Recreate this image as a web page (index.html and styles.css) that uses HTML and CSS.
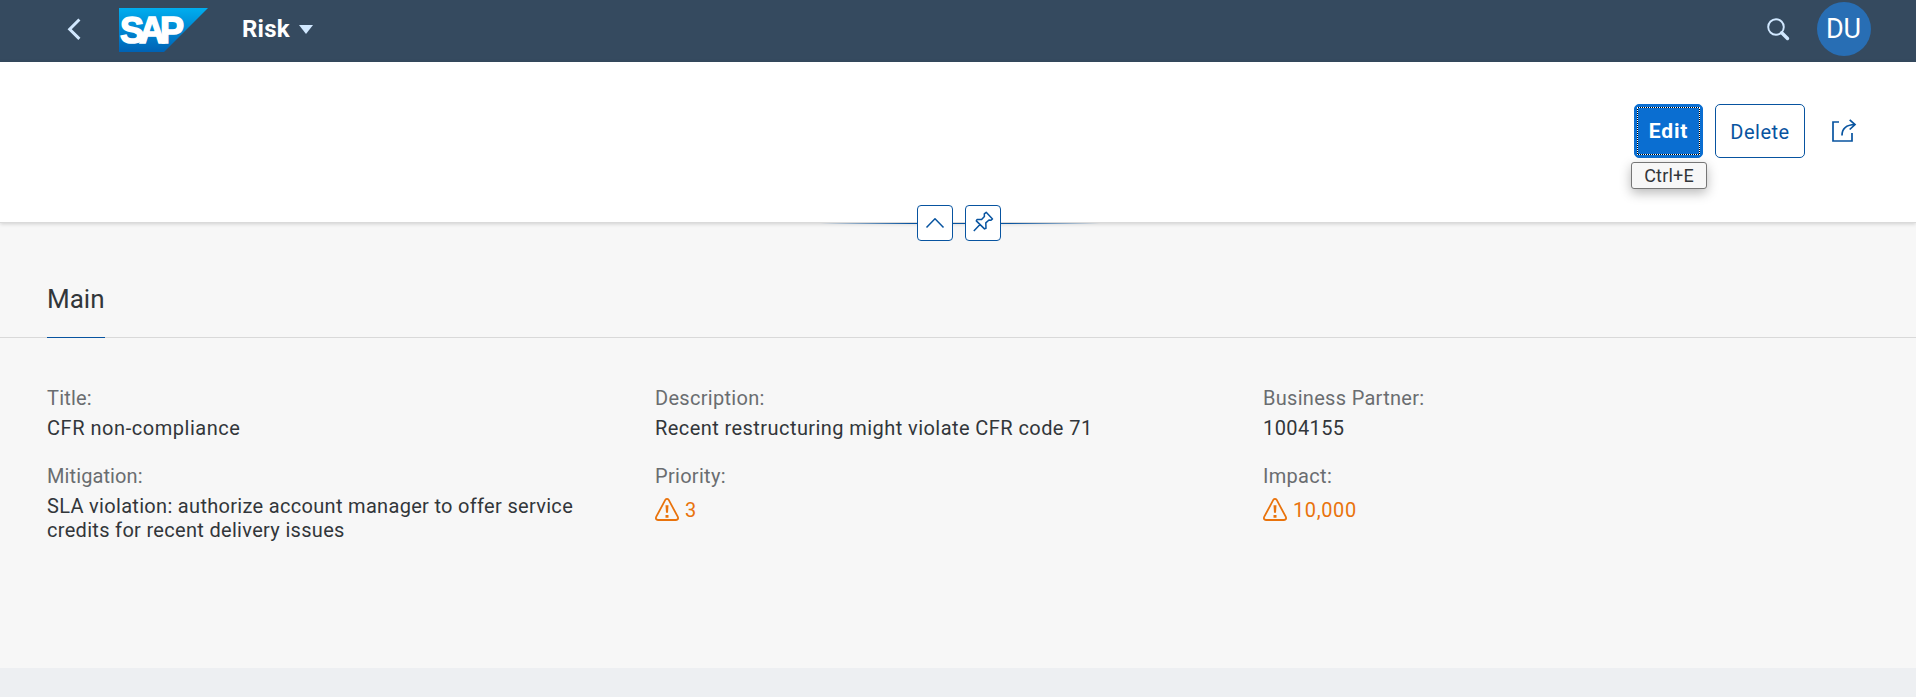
FILE: index.html
```html
<!DOCTYPE html>
<html lang="en">
<head>
<meta charset="utf-8">
<title>Risk</title>
<link rel="stylesheet" href="styles.css">
</head>
<body>
<header class="shell">
  <svg class="back" width="14" height="23" viewBox="0 0 14 23"><path d="M12.400 1.500 2.700 11.200l9.700 9.700" fill="none" stroke="#d1e8ff" stroke-width="3"/></svg>
  <svg class="logo" width="89" height="44" viewBox="0 0 89 44">
    <defs><linearGradient id="sap" x1="0" y1="0" x2="0" y2="1"><stop offset="0" stop-color="#00aeef"/><stop offset=".5" stop-color="#0087d2"/><stop offset="1" stop-color="#0062b4"/></linearGradient></defs>
    <path d="M0 0h89L45 44H0z" fill="url(#sap)"/>
    <text class="logo-text" x="1" y="35" textLength="64" lengthAdjust="spacing">SAP</text>
  </svg>
  <div class="app-title"><span>Risk</span><i class="caret"></i></div>
  <svg class="search" width="23" height="23" viewBox="0 0 23 23" fill="none" stroke="#d1e8ff"><circle cx="9" cy="9" r="7.800" stroke-width="1.900"/><path d="m14.700 14.700 5.800 5.800" stroke-width="3.400" stroke-linecap="round"/></svg>
  <div class="avatar">DU</div>
</header>
<section class="page-head">
  <div class="edit-wrap">
    <button class="btn primary"><span class="edit-label">Edit</span></button>
    <div class="tip"><span>Ctrl+E</span></div>
  </div>
  <button class="btn delete"><span>Delete</span></button>
  <svg class="share" width="26" height="24" viewBox="0 0 26 24" fill="none" stroke="#0854a0" stroke-width="1.700"><path d="M8 3H2v19h19v-8M11 16.500C11 9.500 14.500 5.800 24 5.500M18.700.9l5.300 4.600-5.300 5"/></svg>
  <div class="anchor-line"></div>
  <div class="anchors">
    <div class="anchor"><svg width="36" height="36" viewBox="0 0 36 36"><path d="m9.500 22.500 8.500-8.700 8.500 8.700"/></svg></div>
    <div class="anchor"><svg width="36" height="36" viewBox="0 0 36 36"><path d="m21.200 7.300 6.300 6.600-1.500 1.300-2-.2-3.200 2.900.2 5.400-1.500.6-8.200-8 .7-1.400h4.600l2.800-3-.1-2.700zM15 19.500l-6.200 6.400"/></svg></div>
  </div>
</section>
<nav class="tabs"><span class="tab">Main</span></nav>
<main class="content">
  <div class="field"><label class="l-title">Title:</label><p class="v-title">CFR non-compliance</p></div>
  <div class="field"><label class="l-desc">Description:</label><p class="v-desc">Recent restructuring might violate CFR code 71</p></div>
  <div class="field"><label class="l-bp">Business Partner:</label><p class="v-bp">1004155</p></div>
  <div class="field"><label class="l-mit">Mitigation:</label><p class="v-mit">SLA violation: authorize account manager to offer service<br>credits for recent delivery issues</p></div>
  <div class="field"><label class="l-pri">Priority:</label>
    <div class="status"><svg width="24" height="24" viewBox="0 0 24 24"><path class="tri" d="M10.400 1.700a2 2 0 0 1 3.200 0L22.700 18.700c.9 1.800.2 3.300-1.700 3.300H3c-1.900 0-2.600-1.500-1.700-3.300z"/><path class="mark" d="M10.500 7.200h3l-.5 7.600h-2zM10.500 17h3v2.700h-3z"/></svg><span>3</span></div></div>
  <div class="field"><label class="l-imp">Impact:</label>
    <div class="status"><svg width="24" height="24" viewBox="0 0 24 24"><path class="tri" d="M10.400 1.700a2 2 0 0 1 3.200 0L22.700 18.700c.9 1.800.2 3.300-1.700 3.300H3c-1.900 0-2.600-1.500-1.700-3.300z"/><path class="mark" d="M10.500 7.200h3l-.5 7.600h-2zM10.500 17h3v2.700h-3z"/></svg><span class="v-imp">10,000</span></div></div>
</main>
</body>
</html>
```
FILE: styles.css
```css
* { box-sizing: border-box; }
body { margin: 0; height: 697px; overflow: hidden; background: #edeff2; color: #32363a; font: 20px/24px Roboto, "Noto Sans", sans-serif; display: flex; flex-direction: column; }
svg { display: block; flex: none; }
p { margin: 0; }

.shell { height: 62px; flex: none; background: #354a5f; display: flex; align-items: flex-start; padding: 0 45px 0 67px; }
.back { margin-top: 18px; }
.logo { margin: 8px 0 0 38px; }
.logo-text { font: bold 36px "Liberation Sans", sans-serif; fill: #fff; stroke: #fff; stroke-width: 1.500; }
.app-title { display: flex; align-items: center; gap: 9px; margin: 16px 0 0 34px; font-size: 24px; line-height: 26px; font-weight: bold; color: #fff; letter-spacing: .2px; }
.caret { width: 0; height: 0; border: 7px solid transparent; border-top: 9px solid #d1e8ff; border-bottom: 0; margin-top: 1px; }
.search { margin: 18px 0 0 auto; }
.avatar { margin: 2px 0 0 27px; width: 54px; height: 54px; border-radius: 50%; background: #286eb4; color: #fff; font-size: 27px; line-height: 54px; text-align: center; padding-right: 1px; }

.page-head { position: relative; height: 161px; flex: none; background: #fff; border-bottom: 1px solid #dadada; box-shadow: 0 1px 4px rgba(0,0,0,.16); display: flex; align-items: flex-start; justify-content: flex-end; padding: 42px 59px 0 0; }
.btn { display: block; height: 54px; padding: 0; border: 1px solid #0854a0; border-radius: 5px; background: #fff; color: #0854a0; font: 20px/54px Roboto, "Noto Sans", sans-serif; }
.edit-wrap { position: relative; }
.primary { width: 69px; padding: 2px; background: #0a6ed1; border-color: #0a6ed1; color: #fff; font-size: 21px; font-weight: bold; letter-spacing: .9px; }
.edit-label { display: block; height: 48px; line-height: 47px; border: 1px dotted #fff; background: linear-gradient(#0a6ed1, #0a6ed1) padding-box, linear-gradient(#000, #000) border-box; }
.delete { width: 90px; margin-left: 12px; letter-spacing: .5px; }
.share { margin: 15px 0 0 26px; }
.tip { position: absolute; left: -3px; top: 58px; width: 76px; height: 27px; border: 1px solid #767676; border-radius: 3px; background: #f7f7f7; box-shadow: 0 4px 12px rgba(0,0,0,.28); text-align: center; font-size: 18px; line-height: 26px; color: #32363a; letter-spacing: .2px; }
.anchor-line { position: absolute; left: 820px; top: 161px; width: 280px; height: 1px; background: linear-gradient(90deg, transparent, #0854a0 32%, #0854a0 68%, transparent); }
.anchors { position: absolute; left: 917px; top: 143px; display: flex; gap: 12px; }
.anchor { width: 36px; height: 36px; border: 1px solid #0854a0; border-radius: 4px; background: #fff; }
.anchor svg { margin: -1px; fill: none; stroke: #0854a0; stroke-width: 1.500; stroke-linejoin: round; }

.tabs { height: 115px; flex: none; background: #f7f7f7; border-bottom: 1px solid #d9d9d9; padding: 60px 0 0 47px; }
.tab { display: block; width: 58px; height: 55px; border-bottom: 1px solid #0854a0; font-size: 26px; line-height: 32px; white-space: nowrap; }

.content { height: 330px; flex: none; background: #f7f7f7; display: grid; grid-template-columns: 608px 608px 608px; grid-template-rows: 78px auto; padding: 48px 0 0 47px; }
.field label { display: block; color: #6a6d70; height: 30px; white-space: nowrap; letter-spacing: .3px; }
.field .l-title { letter-spacing: .2px; }
.field .l-mit { letter-spacing: .1px; }
.field p { white-space: nowrap; }
.v-title { letter-spacing: .54px; }
.v-desc { letter-spacing: .43px; }
.v-bp { letter-spacing: .4px; }
.v-mit { letter-spacing: .31px; }
.status { display: flex; gap: 6px; color: #e9730c; padding-top: 4px; letter-spacing: .6px; }
.tri { fill: none; stroke: #e9730c; stroke-width: 1.800; }
.mark { fill: #e9730c; }
```
